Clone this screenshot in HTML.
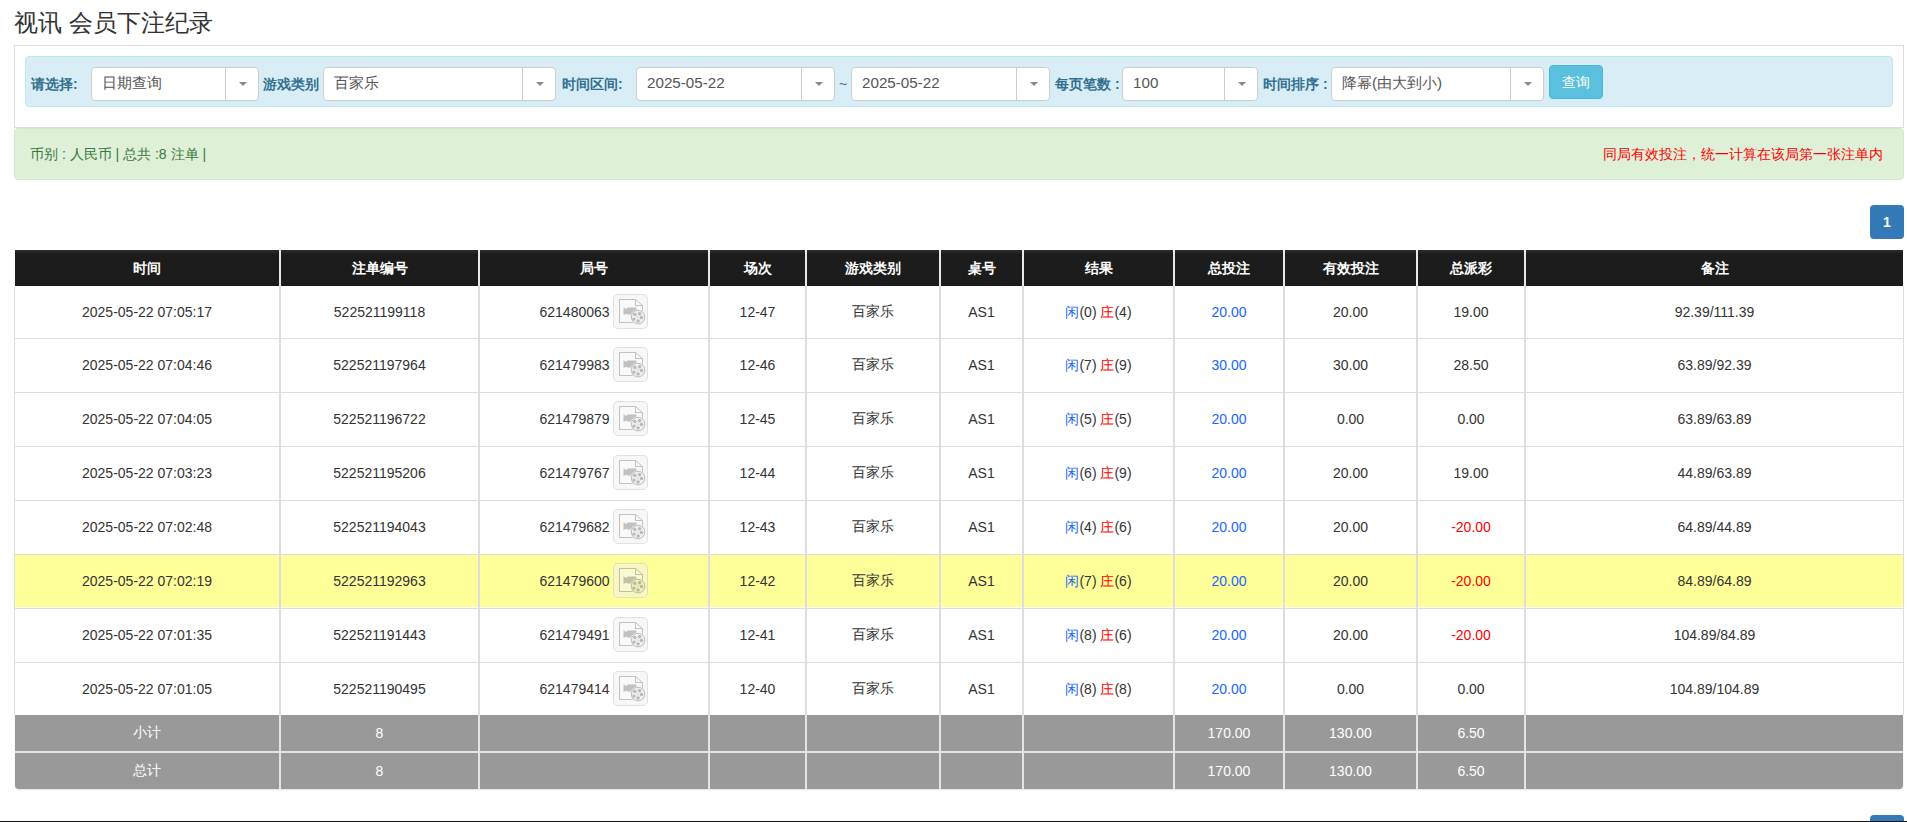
<!DOCTYPE html>
<html><head><meta charset="utf-8">
<style>
*{box-sizing:border-box;margin:0;padding:0}
html,body{width:1907px;height:822px;overflow:hidden;background:#fff}
body{font-family:"Liberation Sans",sans-serif;font-size:14px;color:#333;position:relative}
h1{position:absolute;left:14px;top:6px;font-size:24px;font-weight:normal;color:#333;line-height:34px;white-space:nowrap}
.panel{position:absolute;left:14px;top:45px;width:1890px;height:83px;border:1px solid #ddd;background:#fff}
.info{position:absolute;left:25px;top:56px;width:1868px;height:51px;background:#d9edf7;border:1px solid #bce8f1;border-radius:4px}
.lbl{position:absolute;top:74px;font-size:14px;font-weight:bold;color:#31708f;line-height:20px;white-space:nowrap}
.sel{position:absolute;top:67px;height:34px;background:#fff;border:1px solid #ccc;border-radius:4px}
.st{position:absolute;left:10px;top:-1px;line-height:32px;font-size:15.2px;color:#555;white-space:nowrap}
.car{position:absolute;right:0;top:0;height:32px;border-left:1px solid #ccc}
.car i{position:absolute;left:50%;top:14px;margin-left:-3.5px;border-left:4px solid transparent;border-right:4px solid transparent;border-top:4px solid #888}
.btn{position:absolute;left:1549px;top:65px;width:54px;height:34px;background:#5bc0de;border:1px solid #46b8da;border-radius:4px;color:#fff;font-size:14px;line-height:32px;text-align:center}
.succ{position:absolute;left:14px;top:128px;width:1890px;height:52px;background:#dff0d8;border:1px solid #d6e9c6;border-radius:4px}
.succ .l{position:absolute;left:15px;top:15px;color:#3c763d;line-height:20px;white-space:nowrap}
.succ .r{position:absolute;right:20px;top:15px;color:#f00;line-height:20px;white-space:nowrap}
.pg{position:absolute;left:1870px;top:205px;width:34px;height:34px;background:#337ab7;border-radius:4px;color:#fff;text-align:center;line-height:34px;font-size:14px;font-weight:bold}
.pg2{top:815px}
.c{position:absolute;display:flex;align-items:center;justify-content:center;white-space:nowrap;font-size:14px}
.th{color:#fff;font-weight:bold;padding-top:2px}
.tf{color:#fff}
.thead{position:absolute;left:15px;top:250px;width:1888px;height:36px;background:linear-gradient(#2e2e2e,#1c1c1c 4px)}
.tbody{position:absolute;left:14px;top:286px;width:1890px;height:429px;border-left:1px solid #ddd;border-right:1px solid #ddd;background:#fff}
.tfoot{position:absolute;left:15px;top:715px;width:1888px;height:74px;background:#999;border-radius:0 0 4px 4px;box-shadow:0 1px 2px rgba(0,0,0,.12)}
.vs{position:absolute;width:2px;background:#ddd}
.th-s{background:#e8e8e8}
.f-s{background:#e4e4e4}
.f-h{position:absolute;left:15px;width:1888px;height:2px;background:#e4e4e4}
.hs{position:absolute;left:15px;width:1888px;height:1px;background:#ddd}
.hl{position:absolute;left:15px;width:1888px;background:#ffff99}
.blue{color:#1a66ff}
.red{color:#f00}
.ic{display:inline-block;vertical-align:middle;width:35px;height:35px;background:rgba(239,239,239,0.5);border:1px solid rgba(0,0,0,0.085);border-radius:5px;position:relative;top:-1px;margin-left:0px}
.ic svg{position:absolute;left:-0.3px;top:-1px}
.bline{position:absolute;left:0;top:821px;width:1907px;height:1px;background:#111}
</style></head><body>
<h1>视讯 会员下注纪录</h1>
<div class="panel"></div>
<div class="info"></div>
<div class="lbl" style="left:31px">请选择:</div>
<div class="sel" style="left:91px;width:168px"><span class="st">日期查询</span><span class="car" style="width:33px"><i></i></span></div>
<div class="lbl" style="left:263px">游戏类别</div>
<div class="sel" style="left:323px;width:233px"><span class="st">百家乐</span><span class="car" style="width:33px"><i></i></span></div>
<div class="lbl" style="left:562px">时间区间:</div>
<div class="sel" style="left:636px;width:199px"><span class="st">2025-05-22</span><span class="car" style="width:33px"><i></i></span></div>
<div class="lbl" style="left:839px;font-weight:normal">~</div>
<div class="sel" style="left:851px;width:199px"><span class="st">2025-05-22</span><span class="car" style="width:33px"><i></i></span></div>
<div class="lbl" style="left:1055px">每页笔数 :</div>
<div class="sel" style="left:1122px;width:136px"><span class="st">100</span><span class="car" style="width:33px"><i></i></span></div>
<div class="lbl" style="left:1263px">时间排序 :</div>
<div class="sel" style="left:1331px;width:213px"><span class="st">降幂(由大到小)</span><span class="car" style="width:33px"><i></i></span></div>
<div class="btn">查询</div>
<div class="succ"><span class="l">币别 : 人民币 | 总共 :8 注单 |</span><span class="r">同局有效投注，统一计算在该局第一张注单内</span></div>
<div class="pg">1</div>
<div class="thead"></div>
<div class="c th" style="left:15px;top:250px;width:264px;height:36px;"><span class="in">时间</span></div>
<div class="c th" style="left:281px;top:250px;width:197px;height:36px;"><span class="in">注单编号</span></div>
<div class="c th" style="left:480px;top:250px;width:228px;height:36px;"><span class="in">局号</span></div>
<div class="c th" style="left:710px;top:250px;width:95px;height:36px;"><span class="in">场次</span></div>
<div class="c th" style="left:807px;top:250px;width:132px;height:36px;"><span class="in">游戏类别</span></div>
<div class="c th" style="left:941px;top:250px;width:81px;height:36px;"><span class="in">桌号</span></div>
<div class="c th" style="left:1024px;top:250px;width:149px;height:36px;"><span class="in">结果</span></div>
<div class="c th" style="left:1175px;top:250px;width:108px;height:36px;"><span class="in">总投注</span></div>
<div class="c th" style="left:1285px;top:250px;width:131px;height:36px;"><span class="in">有效投注</span></div>
<div class="c th" style="left:1418px;top:250px;width:106px;height:36px;"><span class="in">总派彩</span></div>
<div class="c th" style="left:1526px;top:250px;width:377px;height:36px;"><span class="in">备注</span></div>
<div class="vs th-s" style="left:279px;top:250px;height:36px"></div>
<div class="vs th-s" style="left:478px;top:250px;height:36px"></div>
<div class="vs th-s" style="left:708px;top:250px;height:36px"></div>
<div class="vs th-s" style="left:805px;top:250px;height:36px"></div>
<div class="vs th-s" style="left:939px;top:250px;height:36px"></div>
<div class="vs th-s" style="left:1022px;top:250px;height:36px"></div>
<div class="vs th-s" style="left:1173px;top:250px;height:36px"></div>
<div class="vs th-s" style="left:1283px;top:250px;height:36px"></div>
<div class="vs th-s" style="left:1416px;top:250px;height:36px"></div>
<div class="vs th-s" style="left:1524px;top:250px;height:36px"></div>
<div class="tbody"></div>
<div class="hs" style="top:338px"></div>
<div class="c td" style="left:15px;top:286px;width:264px;height:52px;"><span class="in">2025-05-22 07:05:17</span></div>
<div class="c td" style="left:281px;top:286px;width:197px;height:52px;"><span class="in">522521199118</span></div>
<div class="c td" style="left:480px;top:286px;width:228px;height:52px;"><span class="in"><span style="position:relative;top:1px">621480063</span>&nbsp;<span class="ic"><svg width="35" height="35" viewBox="0 0 35 35"><defs><mask id="m" maskUnits="userSpaceOnUse" x="0" y="0" width="35" height="35"><rect width="35" height="35" fill="#fff"/><circle cx="24.1" cy="23.1" r="7.7" fill="#000"/></mask></defs><g mask="url(#m)"><path d="M5.5 5.5H21.5L28.5 11.5V28.5H5.5Z" fill="rgba(255,255,255,0.25)" stroke="rgba(0,0,0,0.22)" stroke-width="1"/><path d="M21.5 6V11.5H28" fill="none" stroke="rgba(0,0,0,0.22)" stroke-width="1"/><path d="M13 13.5h9.5v7H13z M9.5 13.5L13 15v4.5l-3.5 1.5z" fill="rgba(0,0,0,0.225)"/></g><circle cx="24.1" cy="23.1" r="6.8" fill="rgba(0,0,0,0.03)" stroke="rgba(0,0,0,0.22)" stroke-width="1"/><g fill="rgba(0,0,0,0.225)"><circle cx="20.9" cy="20.4" r="1.7"/><circle cx="25.6" cy="19.7" r="1.7"/><circle cx="27.5" cy="23.5" r="1.7"/><circle cx="20.0" cy="25.1" r="1.7"/><circle cx="24.1" cy="27.0" r="1.7"/><circle cx="23.7" cy="23.1" r="0.6"/></g></svg></span></span></div>
<div class="c td" style="left:710px;top:286px;width:95px;height:52px;"><span class="in">12-47</span></div>
<div class="c td" style="left:807px;top:286px;width:132px;height:52px;"><span class="in">百家乐</span></div>
<div class="c td" style="left:941px;top:286px;width:81px;height:52px;"><span class="in">AS1</span></div>
<div class="c td" style="left:1024px;top:286px;width:149px;height:52px;"><span class="in"><span style="position:relative;top:1px"><span class="blue">闲</span>(0) <span class="red">庄</span>(4)</span></span></div>
<div class="c td" style="left:1175px;top:286px;width:108px;height:52px;"><span class="in"><span class="blue">20.00</span></span></div>
<div class="c td" style="left:1285px;top:286px;width:131px;height:52px;"><span class="in">20.00</span></div>
<div class="c td" style="left:1418px;top:286px;width:106px;height:52px;"><span class="in"><span class="">19.00</span></span></div>
<div class="c td" style="left:1526px;top:286px;width:377px;height:52px;"><span class="in">92.39/111.39</span></div>
<div class="hs" style="top:392px"></div>
<div class="c td" style="left:15px;top:339px;width:264px;height:52px;"><span class="in">2025-05-22 07:04:46</span></div>
<div class="c td" style="left:281px;top:339px;width:197px;height:52px;"><span class="in">522521197964</span></div>
<div class="c td" style="left:480px;top:339px;width:228px;height:52px;"><span class="in"><span style="position:relative;top:1px">621479983</span>&nbsp;<span class="ic"><svg width="35" height="35" viewBox="0 0 35 35"><defs><mask id="m" maskUnits="userSpaceOnUse" x="0" y="0" width="35" height="35"><rect width="35" height="35" fill="#fff"/><circle cx="24.1" cy="23.1" r="7.7" fill="#000"/></mask></defs><g mask="url(#m)"><path d="M5.5 5.5H21.5L28.5 11.5V28.5H5.5Z" fill="rgba(255,255,255,0.25)" stroke="rgba(0,0,0,0.22)" stroke-width="1"/><path d="M21.5 6V11.5H28" fill="none" stroke="rgba(0,0,0,0.22)" stroke-width="1"/><path d="M13 13.5h9.5v7H13z M9.5 13.5L13 15v4.5l-3.5 1.5z" fill="rgba(0,0,0,0.225)"/></g><circle cx="24.1" cy="23.1" r="6.8" fill="rgba(0,0,0,0.03)" stroke="rgba(0,0,0,0.22)" stroke-width="1"/><g fill="rgba(0,0,0,0.225)"><circle cx="20.9" cy="20.4" r="1.7"/><circle cx="25.6" cy="19.7" r="1.7"/><circle cx="27.5" cy="23.5" r="1.7"/><circle cx="20.0" cy="25.1" r="1.7"/><circle cx="24.1" cy="27.0" r="1.7"/><circle cx="23.7" cy="23.1" r="0.6"/></g></svg></span></span></div>
<div class="c td" style="left:710px;top:339px;width:95px;height:52px;"><span class="in">12-46</span></div>
<div class="c td" style="left:807px;top:339px;width:132px;height:52px;"><span class="in">百家乐</span></div>
<div class="c td" style="left:941px;top:339px;width:81px;height:52px;"><span class="in">AS1</span></div>
<div class="c td" style="left:1024px;top:339px;width:149px;height:52px;"><span class="in"><span style="position:relative;top:1px"><span class="blue">闲</span>(7) <span class="red">庄</span>(9)</span></span></div>
<div class="c td" style="left:1175px;top:339px;width:108px;height:52px;"><span class="in"><span class="blue">30.00</span></span></div>
<div class="c td" style="left:1285px;top:339px;width:131px;height:52px;"><span class="in">30.00</span></div>
<div class="c td" style="left:1418px;top:339px;width:106px;height:52px;"><span class="in"><span class="">28.50</span></span></div>
<div class="c td" style="left:1526px;top:339px;width:377px;height:52px;"><span class="in">63.89/92.39</span></div>
<div class="hs" style="top:446px"></div>
<div class="c td" style="left:15px;top:393px;width:264px;height:52px;"><span class="in">2025-05-22 07:04:05</span></div>
<div class="c td" style="left:281px;top:393px;width:197px;height:52px;"><span class="in">522521196722</span></div>
<div class="c td" style="left:480px;top:393px;width:228px;height:52px;"><span class="in"><span style="position:relative;top:1px">621479879</span>&nbsp;<span class="ic"><svg width="35" height="35" viewBox="0 0 35 35"><defs><mask id="m" maskUnits="userSpaceOnUse" x="0" y="0" width="35" height="35"><rect width="35" height="35" fill="#fff"/><circle cx="24.1" cy="23.1" r="7.7" fill="#000"/></mask></defs><g mask="url(#m)"><path d="M5.5 5.5H21.5L28.5 11.5V28.5H5.5Z" fill="rgba(255,255,255,0.25)" stroke="rgba(0,0,0,0.22)" stroke-width="1"/><path d="M21.5 6V11.5H28" fill="none" stroke="rgba(0,0,0,0.22)" stroke-width="1"/><path d="M13 13.5h9.5v7H13z M9.5 13.5L13 15v4.5l-3.5 1.5z" fill="rgba(0,0,0,0.225)"/></g><circle cx="24.1" cy="23.1" r="6.8" fill="rgba(0,0,0,0.03)" stroke="rgba(0,0,0,0.22)" stroke-width="1"/><g fill="rgba(0,0,0,0.225)"><circle cx="20.9" cy="20.4" r="1.7"/><circle cx="25.6" cy="19.7" r="1.7"/><circle cx="27.5" cy="23.5" r="1.7"/><circle cx="20.0" cy="25.1" r="1.7"/><circle cx="24.1" cy="27.0" r="1.7"/><circle cx="23.7" cy="23.1" r="0.6"/></g></svg></span></span></div>
<div class="c td" style="left:710px;top:393px;width:95px;height:52px;"><span class="in">12-45</span></div>
<div class="c td" style="left:807px;top:393px;width:132px;height:52px;"><span class="in">百家乐</span></div>
<div class="c td" style="left:941px;top:393px;width:81px;height:52px;"><span class="in">AS1</span></div>
<div class="c td" style="left:1024px;top:393px;width:149px;height:52px;"><span class="in"><span style="position:relative;top:1px"><span class="blue">闲</span>(5) <span class="red">庄</span>(5)</span></span></div>
<div class="c td" style="left:1175px;top:393px;width:108px;height:52px;"><span class="in"><span class="blue">20.00</span></span></div>
<div class="c td" style="left:1285px;top:393px;width:131px;height:52px;"><span class="in">0.00</span></div>
<div class="c td" style="left:1418px;top:393px;width:106px;height:52px;"><span class="in"><span class="">0.00</span></span></div>
<div class="c td" style="left:1526px;top:393px;width:377px;height:52px;"><span class="in">63.89/63.89</span></div>
<div class="hs" style="top:500px"></div>
<div class="c td" style="left:15px;top:447px;width:264px;height:52px;"><span class="in">2025-05-22 07:03:23</span></div>
<div class="c td" style="left:281px;top:447px;width:197px;height:52px;"><span class="in">522521195206</span></div>
<div class="c td" style="left:480px;top:447px;width:228px;height:52px;"><span class="in"><span style="position:relative;top:1px">621479767</span>&nbsp;<span class="ic"><svg width="35" height="35" viewBox="0 0 35 35"><defs><mask id="m" maskUnits="userSpaceOnUse" x="0" y="0" width="35" height="35"><rect width="35" height="35" fill="#fff"/><circle cx="24.1" cy="23.1" r="7.7" fill="#000"/></mask></defs><g mask="url(#m)"><path d="M5.5 5.5H21.5L28.5 11.5V28.5H5.5Z" fill="rgba(255,255,255,0.25)" stroke="rgba(0,0,0,0.22)" stroke-width="1"/><path d="M21.5 6V11.5H28" fill="none" stroke="rgba(0,0,0,0.22)" stroke-width="1"/><path d="M13 13.5h9.5v7H13z M9.5 13.5L13 15v4.5l-3.5 1.5z" fill="rgba(0,0,0,0.225)"/></g><circle cx="24.1" cy="23.1" r="6.8" fill="rgba(0,0,0,0.03)" stroke="rgba(0,0,0,0.22)" stroke-width="1"/><g fill="rgba(0,0,0,0.225)"><circle cx="20.9" cy="20.4" r="1.7"/><circle cx="25.6" cy="19.7" r="1.7"/><circle cx="27.5" cy="23.5" r="1.7"/><circle cx="20.0" cy="25.1" r="1.7"/><circle cx="24.1" cy="27.0" r="1.7"/><circle cx="23.7" cy="23.1" r="0.6"/></g></svg></span></span></div>
<div class="c td" style="left:710px;top:447px;width:95px;height:52px;"><span class="in">12-44</span></div>
<div class="c td" style="left:807px;top:447px;width:132px;height:52px;"><span class="in">百家乐</span></div>
<div class="c td" style="left:941px;top:447px;width:81px;height:52px;"><span class="in">AS1</span></div>
<div class="c td" style="left:1024px;top:447px;width:149px;height:52px;"><span class="in"><span style="position:relative;top:1px"><span class="blue">闲</span>(6) <span class="red">庄</span>(9)</span></span></div>
<div class="c td" style="left:1175px;top:447px;width:108px;height:52px;"><span class="in"><span class="blue">20.00</span></span></div>
<div class="c td" style="left:1285px;top:447px;width:131px;height:52px;"><span class="in">20.00</span></div>
<div class="c td" style="left:1418px;top:447px;width:106px;height:52px;"><span class="in"><span class="">19.00</span></span></div>
<div class="c td" style="left:1526px;top:447px;width:377px;height:52px;"><span class="in">44.89/63.89</span></div>
<div class="hs" style="top:554px"></div>
<div class="c td" style="left:15px;top:501px;width:264px;height:52px;"><span class="in">2025-05-22 07:02:48</span></div>
<div class="c td" style="left:281px;top:501px;width:197px;height:52px;"><span class="in">522521194043</span></div>
<div class="c td" style="left:480px;top:501px;width:228px;height:52px;"><span class="in"><span style="position:relative;top:1px">621479682</span>&nbsp;<span class="ic"><svg width="35" height="35" viewBox="0 0 35 35"><defs><mask id="m" maskUnits="userSpaceOnUse" x="0" y="0" width="35" height="35"><rect width="35" height="35" fill="#fff"/><circle cx="24.1" cy="23.1" r="7.7" fill="#000"/></mask></defs><g mask="url(#m)"><path d="M5.5 5.5H21.5L28.5 11.5V28.5H5.5Z" fill="rgba(255,255,255,0.25)" stroke="rgba(0,0,0,0.22)" stroke-width="1"/><path d="M21.5 6V11.5H28" fill="none" stroke="rgba(0,0,0,0.22)" stroke-width="1"/><path d="M13 13.5h9.5v7H13z M9.5 13.5L13 15v4.5l-3.5 1.5z" fill="rgba(0,0,0,0.225)"/></g><circle cx="24.1" cy="23.1" r="6.8" fill="rgba(0,0,0,0.03)" stroke="rgba(0,0,0,0.22)" stroke-width="1"/><g fill="rgba(0,0,0,0.225)"><circle cx="20.9" cy="20.4" r="1.7"/><circle cx="25.6" cy="19.7" r="1.7"/><circle cx="27.5" cy="23.5" r="1.7"/><circle cx="20.0" cy="25.1" r="1.7"/><circle cx="24.1" cy="27.0" r="1.7"/><circle cx="23.7" cy="23.1" r="0.6"/></g></svg></span></span></div>
<div class="c td" style="left:710px;top:501px;width:95px;height:52px;"><span class="in">12-43</span></div>
<div class="c td" style="left:807px;top:501px;width:132px;height:52px;"><span class="in">百家乐</span></div>
<div class="c td" style="left:941px;top:501px;width:81px;height:52px;"><span class="in">AS1</span></div>
<div class="c td" style="left:1024px;top:501px;width:149px;height:52px;"><span class="in"><span style="position:relative;top:1px"><span class="blue">闲</span>(4) <span class="red">庄</span>(6)</span></span></div>
<div class="c td" style="left:1175px;top:501px;width:108px;height:52px;"><span class="in"><span class="blue">20.00</span></span></div>
<div class="c td" style="left:1285px;top:501px;width:131px;height:52px;"><span class="in">20.00</span></div>
<div class="c td" style="left:1418px;top:501px;width:106px;height:52px;"><span class="in"><span class="red">-20.00</span></span></div>
<div class="c td" style="left:1526px;top:501px;width:377px;height:52px;"><span class="in">64.89/44.89</span></div>
<div class="hl" style="top:555px;height:52px"></div>
<div class="hs" style="top:608px"></div>
<div class="c td" style="left:15px;top:555px;width:264px;height:52px;"><span class="in">2025-05-22 07:02:19</span></div>
<div class="c td" style="left:281px;top:555px;width:197px;height:52px;"><span class="in">522521192963</span></div>
<div class="c td" style="left:480px;top:555px;width:228px;height:52px;"><span class="in"><span style="position:relative;top:1px">621479600</span>&nbsp;<span class="ic"><svg width="35" height="35" viewBox="0 0 35 35"><defs><mask id="m" maskUnits="userSpaceOnUse" x="0" y="0" width="35" height="35"><rect width="35" height="35" fill="#fff"/><circle cx="24.1" cy="23.1" r="7.7" fill="#000"/></mask></defs><g mask="url(#m)"><path d="M5.5 5.5H21.5L28.5 11.5V28.5H5.5Z" fill="rgba(255,255,255,0.25)" stroke="rgba(0,0,0,0.22)" stroke-width="1"/><path d="M21.5 6V11.5H28" fill="none" stroke="rgba(0,0,0,0.22)" stroke-width="1"/><path d="M13 13.5h9.5v7H13z M9.5 13.5L13 15v4.5l-3.5 1.5z" fill="rgba(0,0,0,0.225)"/></g><circle cx="24.1" cy="23.1" r="6.8" fill="rgba(0,0,0,0.03)" stroke="rgba(0,0,0,0.22)" stroke-width="1"/><g fill="rgba(0,0,0,0.225)"><circle cx="20.9" cy="20.4" r="1.7"/><circle cx="25.6" cy="19.7" r="1.7"/><circle cx="27.5" cy="23.5" r="1.7"/><circle cx="20.0" cy="25.1" r="1.7"/><circle cx="24.1" cy="27.0" r="1.7"/><circle cx="23.7" cy="23.1" r="0.6"/></g></svg></span></span></div>
<div class="c td" style="left:710px;top:555px;width:95px;height:52px;"><span class="in">12-42</span></div>
<div class="c td" style="left:807px;top:555px;width:132px;height:52px;"><span class="in">百家乐</span></div>
<div class="c td" style="left:941px;top:555px;width:81px;height:52px;"><span class="in">AS1</span></div>
<div class="c td" style="left:1024px;top:555px;width:149px;height:52px;"><span class="in"><span style="position:relative;top:1px"><span class="blue">闲</span>(7) <span class="red">庄</span>(6)</span></span></div>
<div class="c td" style="left:1175px;top:555px;width:108px;height:52px;"><span class="in"><span class="blue">20.00</span></span></div>
<div class="c td" style="left:1285px;top:555px;width:131px;height:52px;"><span class="in">20.00</span></div>
<div class="c td" style="left:1418px;top:555px;width:106px;height:52px;"><span class="in"><span class="red">-20.00</span></span></div>
<div class="c td" style="left:1526px;top:555px;width:377px;height:52px;"><span class="in">84.89/64.89</span></div>
<div class="hs" style="top:662px"></div>
<div class="c td" style="left:15px;top:609px;width:264px;height:52px;"><span class="in">2025-05-22 07:01:35</span></div>
<div class="c td" style="left:281px;top:609px;width:197px;height:52px;"><span class="in">522521191443</span></div>
<div class="c td" style="left:480px;top:609px;width:228px;height:52px;"><span class="in"><span style="position:relative;top:1px">621479491</span>&nbsp;<span class="ic"><svg width="35" height="35" viewBox="0 0 35 35"><defs><mask id="m" maskUnits="userSpaceOnUse" x="0" y="0" width="35" height="35"><rect width="35" height="35" fill="#fff"/><circle cx="24.1" cy="23.1" r="7.7" fill="#000"/></mask></defs><g mask="url(#m)"><path d="M5.5 5.5H21.5L28.5 11.5V28.5H5.5Z" fill="rgba(255,255,255,0.25)" stroke="rgba(0,0,0,0.22)" stroke-width="1"/><path d="M21.5 6V11.5H28" fill="none" stroke="rgba(0,0,0,0.22)" stroke-width="1"/><path d="M13 13.5h9.5v7H13z M9.5 13.5L13 15v4.5l-3.5 1.5z" fill="rgba(0,0,0,0.225)"/></g><circle cx="24.1" cy="23.1" r="6.8" fill="rgba(0,0,0,0.03)" stroke="rgba(0,0,0,0.22)" stroke-width="1"/><g fill="rgba(0,0,0,0.225)"><circle cx="20.9" cy="20.4" r="1.7"/><circle cx="25.6" cy="19.7" r="1.7"/><circle cx="27.5" cy="23.5" r="1.7"/><circle cx="20.0" cy="25.1" r="1.7"/><circle cx="24.1" cy="27.0" r="1.7"/><circle cx="23.7" cy="23.1" r="0.6"/></g></svg></span></span></div>
<div class="c td" style="left:710px;top:609px;width:95px;height:52px;"><span class="in">12-41</span></div>
<div class="c td" style="left:807px;top:609px;width:132px;height:52px;"><span class="in">百家乐</span></div>
<div class="c td" style="left:941px;top:609px;width:81px;height:52px;"><span class="in">AS1</span></div>
<div class="c td" style="left:1024px;top:609px;width:149px;height:52px;"><span class="in"><span style="position:relative;top:1px"><span class="blue">闲</span>(8) <span class="red">庄</span>(6)</span></span></div>
<div class="c td" style="left:1175px;top:609px;width:108px;height:52px;"><span class="in"><span class="blue">20.00</span></span></div>
<div class="c td" style="left:1285px;top:609px;width:131px;height:52px;"><span class="in">20.00</span></div>
<div class="c td" style="left:1418px;top:609px;width:106px;height:52px;"><span class="in"><span class="red">-20.00</span></span></div>
<div class="c td" style="left:1526px;top:609px;width:377px;height:52px;"><span class="in">104.89/84.89</span></div>
<div class="c td" style="left:15px;top:663px;width:264px;height:52px;"><span class="in">2025-05-22 07:01:05</span></div>
<div class="c td" style="left:281px;top:663px;width:197px;height:52px;"><span class="in">522521190495</span></div>
<div class="c td" style="left:480px;top:663px;width:228px;height:52px;"><span class="in"><span style="position:relative;top:1px">621479414</span>&nbsp;<span class="ic"><svg width="35" height="35" viewBox="0 0 35 35"><defs><mask id="m" maskUnits="userSpaceOnUse" x="0" y="0" width="35" height="35"><rect width="35" height="35" fill="#fff"/><circle cx="24.1" cy="23.1" r="7.7" fill="#000"/></mask></defs><g mask="url(#m)"><path d="M5.5 5.5H21.5L28.5 11.5V28.5H5.5Z" fill="rgba(255,255,255,0.25)" stroke="rgba(0,0,0,0.22)" stroke-width="1"/><path d="M21.5 6V11.5H28" fill="none" stroke="rgba(0,0,0,0.22)" stroke-width="1"/><path d="M13 13.5h9.5v7H13z M9.5 13.5L13 15v4.5l-3.5 1.5z" fill="rgba(0,0,0,0.225)"/></g><circle cx="24.1" cy="23.1" r="6.8" fill="rgba(0,0,0,0.03)" stroke="rgba(0,0,0,0.22)" stroke-width="1"/><g fill="rgba(0,0,0,0.225)"><circle cx="20.9" cy="20.4" r="1.7"/><circle cx="25.6" cy="19.7" r="1.7"/><circle cx="27.5" cy="23.5" r="1.7"/><circle cx="20.0" cy="25.1" r="1.7"/><circle cx="24.1" cy="27.0" r="1.7"/><circle cx="23.7" cy="23.1" r="0.6"/></g></svg></span></span></div>
<div class="c td" style="left:710px;top:663px;width:95px;height:52px;"><span class="in">12-40</span></div>
<div class="c td" style="left:807px;top:663px;width:132px;height:52px;"><span class="in">百家乐</span></div>
<div class="c td" style="left:941px;top:663px;width:81px;height:52px;"><span class="in">AS1</span></div>
<div class="c td" style="left:1024px;top:663px;width:149px;height:52px;"><span class="in"><span style="position:relative;top:1px"><span class="blue">闲</span>(8) <span class="red">庄</span>(8)</span></span></div>
<div class="c td" style="left:1175px;top:663px;width:108px;height:52px;"><span class="in"><span class="blue">20.00</span></span></div>
<div class="c td" style="left:1285px;top:663px;width:131px;height:52px;"><span class="in">0.00</span></div>
<div class="c td" style="left:1418px;top:663px;width:106px;height:52px;"><span class="in"><span class="">0.00</span></span></div>
<div class="c td" style="left:1526px;top:663px;width:377px;height:52px;"><span class="in">104.89/104.89</span></div>
<div class="vs" style="left:279px;top:286px;height:429px"></div>
<div class="vs" style="left:478px;top:286px;height:429px"></div>
<div class="vs" style="left:708px;top:286px;height:429px"></div>
<div class="vs" style="left:805px;top:286px;height:429px"></div>
<div class="vs" style="left:939px;top:286px;height:429px"></div>
<div class="vs" style="left:1022px;top:286px;height:429px"></div>
<div class="vs" style="left:1173px;top:286px;height:429px"></div>
<div class="vs" style="left:1283px;top:286px;height:429px"></div>
<div class="vs" style="left:1416px;top:286px;height:429px"></div>
<div class="vs" style="left:1524px;top:286px;height:429px"></div>
<div class="tfoot"></div>
<div class="c tf" style="left:15px;top:715px;width:264px;height:36px;"><span class="in">小计</span></div>
<div class="c tf" style="left:281px;top:715px;width:197px;height:36px;"><span class="in">8</span></div>
<div class="c tf" style="left:1175px;top:715px;width:108px;height:36px;"><span class="in">170.00</span></div>
<div class="c tf" style="left:1285px;top:715px;width:131px;height:36px;"><span class="in">130.00</span></div>
<div class="c tf" style="left:1418px;top:715px;width:106px;height:36px;"><span class="in">6.50</span></div>
<div class="c tf" style="left:15px;top:753px;width:264px;height:36px;"><span class="in">总计</span></div>
<div class="c tf" style="left:281px;top:753px;width:197px;height:36px;"><span class="in">8</span></div>
<div class="c tf" style="left:1175px;top:753px;width:108px;height:36px;"><span class="in">170.00</span></div>
<div class="c tf" style="left:1285px;top:753px;width:131px;height:36px;"><span class="in">130.00</span></div>
<div class="c tf" style="left:1418px;top:753px;width:106px;height:36px;"><span class="in">6.50</span></div>
<div class="vs f-s" style="left:279px;top:715px;height:74px"></div>
<div class="vs f-s" style="left:478px;top:715px;height:74px"></div>
<div class="vs f-s" style="left:708px;top:715px;height:74px"></div>
<div class="vs f-s" style="left:805px;top:715px;height:74px"></div>
<div class="vs f-s" style="left:939px;top:715px;height:74px"></div>
<div class="vs f-s" style="left:1022px;top:715px;height:74px"></div>
<div class="vs f-s" style="left:1173px;top:715px;height:74px"></div>
<div class="vs f-s" style="left:1283px;top:715px;height:74px"></div>
<div class="vs f-s" style="left:1416px;top:715px;height:74px"></div>
<div class="vs f-s" style="left:1524px;top:715px;height:74px"></div>
<div class="f-h" style="top:751px"></div>
<div class="pg pg2"></div>
<div class="bline"></div>
</body></html>
